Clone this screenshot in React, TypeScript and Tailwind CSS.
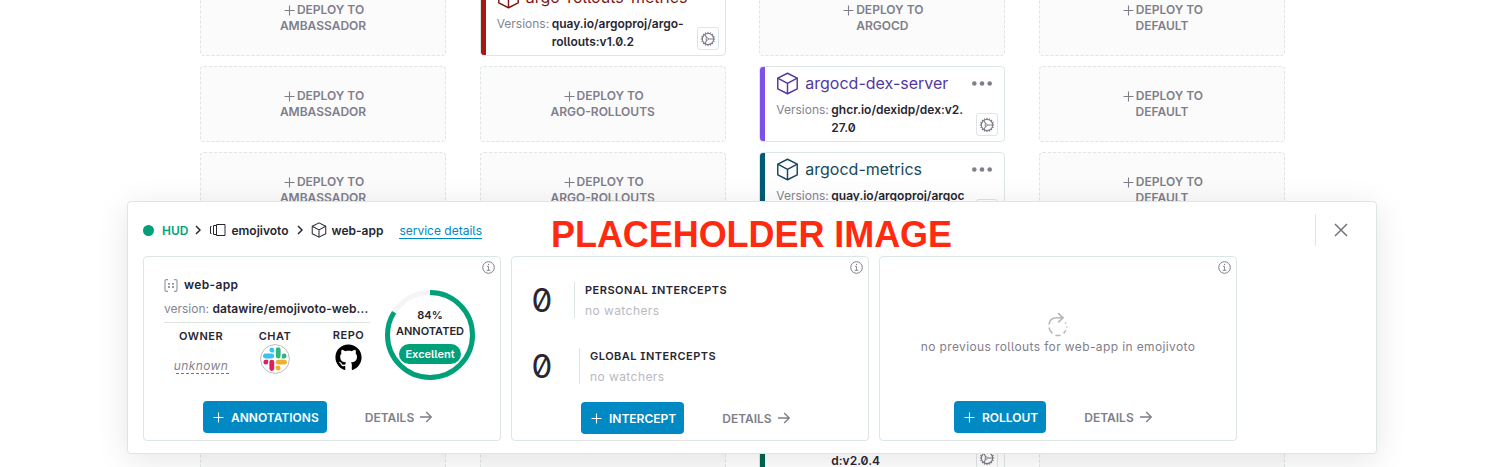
import { ReactNode } from "react";
import { FaGithub } from "react-icons/fa";

function Plus({ className = "" }: { className?: string }) {
  return (
    <svg viewBox="0 0 11 11" className={"size-[11px] shrink-0 " + className} fill="none" stroke="currentColor" strokeWidth="1.1">
      <path d="M5.5 0.5v10M0.5 5.5h10" />
    </svg>
  );
}

function Cube({ className = "", stroke = 1.4 }: { className?: string; stroke?: number }) {
  return (
    <svg viewBox="0 0 22 22" className={"shrink-0 " + className} fill="none" stroke="currentColor" strokeWidth={stroke} strokeLinejoin="round">
      <path d="M11 1.2 20.3 5.8v10.3L11 20.8l-9.3-4.7V5.8z" />
      <path d="M1.7 5.8l9.3 5 9.3-5M11 10.8v10" />
    </svg>
  );
}

function Gear() {
  const teeth = Array.from({ length: 16 }, (_, i) => i * 22.5);
  return (
    <svg viewBox="0 0 16 16" className="size-4" fill="none" stroke="#7f7e8a">
      <circle cx="8" cy="8" r="5.7" strokeWidth="1.2" />
      {teeth.map((a) => (
        <path key={a} d="M8 2.2V0.8" strokeWidth="1" transform={`rotate(${a} 8 8)`} />
      ))}
      <path d="M8.4 8H13.6M6.8 7 4.8 3.2M6.8 9 4.8 12.8" strokeWidth="1.1" />
      <circle cx="7.2" cy="8" r="1.2" strokeWidth="0.9" />
    </svg>
  );
}

function Info() {
  return (
    <svg viewBox="0 0 13 13" className="absolute right-[5px] top-[4px] size-[13px]" fill="none" stroke="#7f7e8a">
      <circle cx="6.5" cy="6.5" r="5.8" strokeWidth="1" />
      <path d="M5 5.5h1.6v3.7M4.7 9.3h3.7" strokeWidth="0.9" />
      <path d="M5.9 3.5h1.2" strokeWidth="1.2" />
    </svg>
  );
}

function Deploy({ target }: { target: string }) {
  return (
    <div className="flex h-[76px] flex-col items-center justify-center rounded-[4px] border border-dashed border-[#dde5e5] bg-[#fbfbfb] text-center text-[12px] font-semibold leading-4 text-[#7f7e8a]">
      <div className="flex items-center gap-[2px] pl-[2px]">
        <Plus />
        DEPLOY TO
      </div>
      <div>{target}</div>
    </div>
  );
}

type ServiceProps = { name: string; first: string; second: string; bar: string; text: string };

function Service({ name, first, second, bar, text }: ServiceProps) {
  return (
    <div className="relative flex h-[76px] overflow-hidden rounded-[4px] border border-[#dde5e5] bg-white">
      <div className={"w-[5px] shrink-0 " + bar} />
      <div className="min-w-0 flex-1 pl-[11px] pr-[10px] pt-[5px]">
        <div className={"flex h-[22px] items-center " + text}>
          <Cube className="size-[23px]" />
          <span className="ml-[6px] text-[16px] leading-[22px]">{name}</span>
          <svg viewBox="0 0 20 5" className="ml-auto mr-[2px] h-[5px] w-[20px]" fill="#7f7e8a">
            <circle cx="2.3" cy="2.5" r="2.3" />
            <circle cx="10" cy="2.5" r="2.3" />
            <circle cx="17.7" cy="2.5" r="2.3" />
          </svg>
        </div>
        <div className="mt-[7px] flex text-[12px] leading-[18px]">
          <span className="w-[55px] shrink-0 text-[#85848f]">Versions:</span>
          <span className="whitespace-nowrap font-semibold text-[#272632]">
            {first}
            <br />
            {second}
          </span>
        </div>
      </div>
      <div className="absolute bottom-[5px] right-[6px] flex h-[23px] w-[22px] items-center justify-center rounded-[3px] border border-[#dde5e5] bg-white">
        <Gear />
      </div>
    </div>
  );
}

function Panel({ children, action, left, bottom }: { children: ReactNode; action: string; left: string; bottom: string }) {
  return (
    <section className="relative flex h-[185px] w-[358px] flex-col rounded-[4px] border border-[#dde5e5]">
      <Info />
      <div className="min-h-0 flex-1">{children}</div>
      <div className={"flex h-8 items-center text-[12px] font-semibold [font-feature-settings:normal] " + left + " " + bottom}>
        <button className="flex h-8 items-center gap-[7px] rounded-[4px] bg-[#0089c3] pl-[10px] pr-2 text-white">
          <Plus />
          <span className="pt-px">{action}</span>
        </button>
        <span className="ml-[38px] pt-px text-[#7f7e8a]">DETAILS</span>
        <svg viewBox="0 0 12 12" className="ml-[6px] size-3" fill="none" stroke="#7f7e8a" strokeWidth="1.4">
          <path d="M0 6h11M6.2 1l5 5-5 5" />
        </svg>
      </div>
    </section>
  );
}

function Chevron({ className }: { className: string }) {
  return (
    <svg viewBox="0 0 6 10" className={"h-[10px] w-[6px] " + className} fill="none" stroke="#272632" strokeWidth="1.5">
      <path d="M1 1l4 4-4 4" />
    </svg>
  );
}

function Slack() {
  return (
    <svg viewBox="0 0 30 30" className="size-[30px]">
      <circle cx="15" cy="15" r="14.4" fill="#fff" stroke="#bdbdc2" />
      <g fill="#36c5f0">
        <rect x="3" y="9.6" width="11.2" height="4.8" rx="2.4" />
        <path d="M14.2 8.4h-2.4A2.4 2.4 0 1 1 14.2 6z" />
      </g>
      <g fill="#2eb67d">
        <rect x="15.8" y="3.2" width="4.8" height="11.2" rx="2.4" />
        <path d="M21.8 14.4V12a2.4 2.4 0 1 1 2.4 2.4z" />
      </g>
      <g fill="#ecb22e">
        <rect x="15.8" y="15.8" width="11.2" height="4.8" rx="2.4" />
        <path d="M15.8 21.8h2.4a2.4 2.4 0 1 1-2.4 2.4z" />
      </g>
      <g fill="#e01e5a">
        <rect x="9.4" y="15.8" width="4.8" height="11.2" rx="2.4" />
        <path d="M8.2 15.8v2.4a2.4 2.4 0 1 1-2.4-2.4z" />
      </g>
    </svg>
  );
}

function Intercepts({ title, className, line }: { title: string; className: string; line: string }) {
  return (
    <div className={"flex h-9 items-center " + className}>
      <span className="w-[22px] text-center text-[33px] leading-9">0</span>
      <div className={"flex h-9 flex-col justify-between border-l border-[#dde5e5] pl-[10px] " + line}>
        <span className="text-[11px] font-semibold leading-4 tracking-[0.5px]">{title}</span>
        <span className="text-[12px] leading-[14px] tracking-[0.43px] text-[#b9b9bf]">no watchers</span>
      </div>
    </div>
  );
}

export default function App() {
  return (
    <div className="relative h-[467px] w-[1504px] overflow-hidden bg-white font-['Inter',sans-serif] text-[#272632] [font-feature-settings:'zero','ss02']">
      <main className="-mt-5 ml-[200px] grid w-[1085px] grid-cols-4 gap-x-[33.6px] gap-y-[10px]">
        <Deploy target="AMBASSADOR" />
        <Service name="argo-rollouts-metrics" first="quay.io/argoproj/argo-" second="rollouts:v1.0.2" bar="bg-[#a8180f]" text="text-[#7d1712]" />
        <Deploy target="ARGOCD" />
        <Deploy target="DEFAULT" />
        <Deploy target="AMBASSADOR" />
        <Deploy target="ARGO-ROLLOUTS" />
        <Service name="argocd-dex-server" first="ghcr.io/dexidp/dex:v2." second="27.0" bar="bg-[#7b51e8]" text="text-[#54389f]" />
        <Deploy target="DEFAULT" />
        <Deploy target="AMBASSADOR" />
        <Deploy target="ARGO-ROLLOUTS" />
        <Service name="argocd-metrics" first="quay.io/argoproj/argoc" second="d:v2.0.4" bar="bg-[#005b78]" text="text-[#17495b]" />
        <Deploy target="DEFAULT" />
      </main>
      <div className="ml-[200px] mt-[171px] grid w-[1085px] grid-cols-4 gap-x-[33.6px]">
        <Deploy target="AMBASSADOR" />
        <Deploy target="ARGO-ROLLOUTS" />
        <Service name="argocd-server" first="quay.io/argoproj/argoc" second="d:v2.0.4" bar="bg-[#00664f]" text="text-[#17495b]" />
        <Deploy target="DEFAULT" />
      </div>

      <div className="absolute left-[127px] top-[201px] h-[253px] w-[1250px] rounded-[4px] border border-[#dde5e5] bg-white px-[15px] shadow-[0_6px_32px_rgba(0,0,0,0.1)]">
        <header className="flex h-[54px] items-center text-[12px] font-semibold">
          <span className="mt-[2px] size-[11px] rounded-full bg-[#00a179]" />
          <span className="ml-2 mt-[3px] text-[#00a179]">HUD</span>
          <Chevron className="ml-[7px] mt-[2px]" />
          <svg viewBox="0 0 17 12" className="ml-[8px] mt-[2px] h-3 w-[17px]" fill="none" stroke="#272632">
            <path d="M7.5 0.5h8.5v11H7.5zM7.5 1.5h-3v9h3M2.5 2.5h-1v7h1" />
          </svg>
          <span className="ml-[5px] mt-[3px]">emojivoto</span>
          <Chevron className="ml-[8px] mt-[2px]" />
          <Cube className="ml-[8px] mt-[1px] size-4" stroke={1.4} />
          <span className="ml-[5px] mt-[3px]">web-app</span>
          <a className="ml-4 mt-[4px] border-b border-[#0089c3] font-normal leading-[14px] text-[#0089c3]">service details</a>
          <div className="ml-auto mt-[2px] h-8 border-l border-[#dde5e5]" />
          <svg viewBox="0 0 14 14" className="ml-[18px] mr-[13px] mt-[2px] size-[14px]" fill="none" stroke="#73737f" strokeWidth="1.5">
            <path d="M1 1l12 12M13 1L1 13" />
          </svg>
        </header>

        <div className="flex gap-[10px]">
          <Panel action="ANNOTATIONS" left="pl-[59px]" bottom="mb-[7px]">
            <div className="flex justify-between pl-5 pr-[25px]">
              <div className="w-[206px] pt-[19px]">
                <div className="flex h-[18px] items-center">
                  <svg viewBox="0 0 14 13" className="h-[13px] w-[14px]" fill="none" stroke="#9a99a3" strokeWidth="1.2">
                    <path d="M4 0.6H2.4Q1 .6 1 2v9q0 1.4 1.4 1.4H4M10 .6h1.6Q13 .6 13 2v9q0 1.4-1.4 1.4H10" />
                    <path d="M4 4.8h2M8 4.8h2M4 8h2M8 8h2" strokeWidth="1.8" />
                  </svg>
                  <span className="ml-[6px] text-[12px] font-semibold tracking-[0.35px]">web-app</span>
                </div>
                <div className="mt-[6px] h-[23px] whitespace-nowrap border-b border-[#dde5e5] text-[12px] leading-[18px]">
                  <span className="text-[#85848f]">version:</span> <b className="font-semibold tracking-[0.1px]">datawire/emojivoto-web...</b>
                </div>
                <div className="flex text-[11px] font-semibold leading-4 tracking-[0.5px]">
                  <div className="flex w-[74px] shrink-0 flex-col items-center pt-[5px]">
                    OWNER
                    <span className="relative mt-[14px] text-[12px] font-normal italic tracking-[0.4px] text-[#85848f]">
                      unknown
                      <i className="absolute -right-px bottom-0 left-[2px] border-b border-dashed border-[#777]" />
                    </span>
                  </div>
                  <div className="flex w-[74px] shrink-0 flex-col items-center pt-[5px]">
                    CHAT
                    <Slack />
                  </div>
                  <div className="flex w-[73px] shrink-0 flex-col items-center pt-[4px]">
                    REPO
                    <FaGithub className="mt-[1px] size-[27px] text-black" />
                  </div>
                </div>
              </div>
              <div className="relative mt-[33px] flex size-[90px] shrink-0 flex-col items-center text-[11px] font-semibold leading-4">
                <svg viewBox="0 0 90 90" className="absolute inset-0 size-[90px]" fill="none" strokeWidth="5">
                  <circle cx="45" cy="45" r="42.5" stroke="#f4f5f7" />
                  <circle cx="45" cy="45" r="42.5" stroke="#00a179" pathLength="100" strokeDasharray="84 16" transform="rotate(-90 45 45)" />
                </svg>
                <span className="mt-[17px]">84%</span>
                <span>ANNOTATED</span>
                <span className="mt-[5px] h-5 rounded-full bg-[#00a179] px-[6px] leading-5 text-white">Excellent</span>
              </div>
            </div>
          </Panel>
          <Panel action="INTERCEPT" left="pl-[69px]" bottom="mb-[6px]">
            <Intercepts title="PERSONAL INTERCEPTS" className="mt-[25px] pl-[19px]" line="ml-[21px]" />
            <Intercepts title="GLOBAL INTERCEPTS" className="mt-[30px] pl-[19px]" line="ml-[26px]" />
          </Panel>
          <Panel action="ROLLOUT" left="pl-[74px]" bottom="mb-[7px]">
            <div className="flex flex-col items-center pt-[55px]">
              <svg viewBox="0 0 20 25" className="h-[25px] w-5" fill="none" stroke="#b5b5bb" strokeWidth="1.6">
                <path d="M1 12.5C1.5 8 4.5 5.8 9 5.8h6M10.2 1.2l4.9 4.6-4.9 4.6" />
                <path d="M1 15.5c.3 2.5 1.4 4.3 3.4 5.8M7.5 23.2c1.8.5 3.5.4 5 0M15.5 21.3c1.2-1 1.8-1.8 2.3-3M18.8 15.5v-1M17.8 11.5l-.5-1.1" />
              </svg>
              <span className="mt-[1px] text-[12px] leading-[18px] tracking-[0.38px] text-[#7f7e8a]">no previous rollouts for web-app in emojivoto</span>
            </div>
          </Panel>
        </div>

        <div className="pointer-events-none absolute left-[423px] top-[13px] whitespace-nowrap font-['Liberation_Sans',sans-serif] text-[36px] font-bold leading-10 tracking-[-0.06px] text-[#ff2a0f]">
          PLACEHOLDER IMAGE
        </div>
      </div>
    </div>
  );
}
